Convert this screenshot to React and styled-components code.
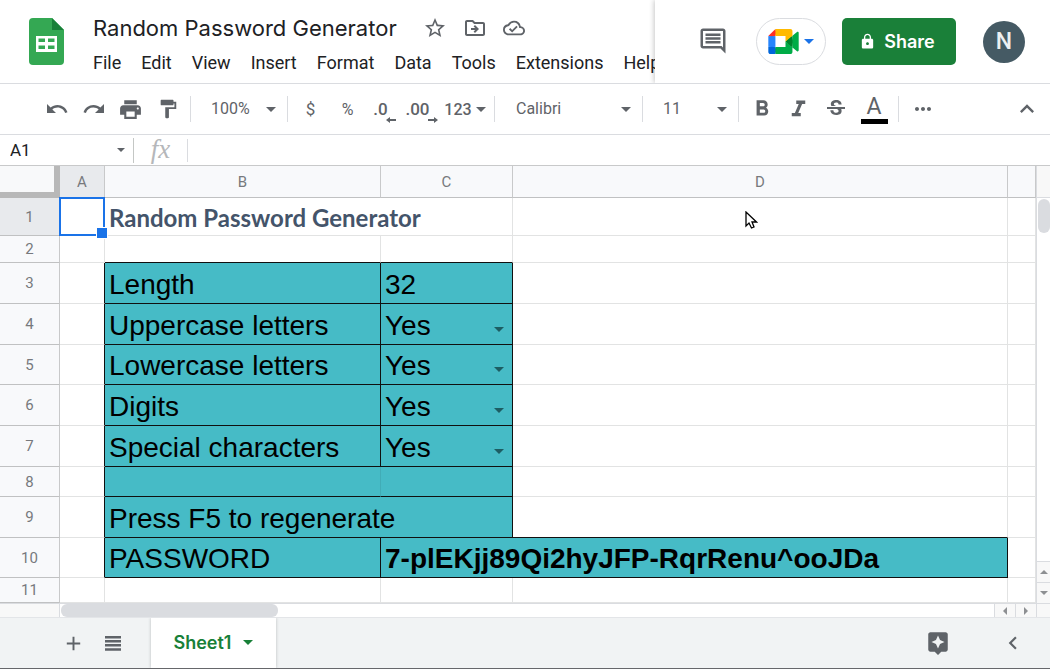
import React, { useState } from 'react';
import styled, { createGlobalStyle } from 'styled-components';
import {
  MdAdd,
  MdAssistant,
  MdFormatBold,
  MdFormatItalic,
  MdFormatPaint,
  MdKeyboardArrowLeft,
  MdKeyboardArrowUp,
  MdLock,
  MdMoreHoriz,
  MdOutlineCloudDone,
  MdOutlineComment,
  MdOutlineDriveFileMove,
  MdPrint,
  MdRedo,
  MdStarBorder,
  MdStrikethroughS,
  MdUndo,
} from 'react-icons/md';

const TEAL = '#46bbc6';
const GRID = '#e2e3e3';
const INK = '#101010';

const GlobalStyle = createGlobalStyle`
  * {
    box-sizing: border-box;
  }

  body {
    margin: 0;
    background: #ffffff;
    font-family: Roboto, sans-serif;
    color: #202124;
  }

  button,
  input,
  select {
    margin: 0;
    padding: 0;
    border: none;
    background: none;
    font-family: inherit;
    color: inherit;
  }
`;

const Page = styled.div`
  display: flex;
  flex-direction: column;
  min-height: 100vh;
`;

const Header = styled.header`
  display: flex;
  height: 84px;
  border-bottom: 1px solid #dadce0;
`;

const Document = styled.div`
  display: flex;
  flex: 1;
  min-width: 0;
  overflow: hidden;
  padding-left: 29px;
`;

const LogoLink = styled.a`
  flex: none;
  margin-top: 18px;
  line-height: 0;
`;

const DocumentInfo = styled.div`
  flex: none;
  padding: 12px 0 0 29px;
`;

const TitleRow = styled.div`
  display: flex;
  align-items: center;
  gap: 16px;
  height: 32px;
`;

const Title = styled.h1`
  margin: 0 10px 0 0;
  font-family: Inter, sans-serif;
  font-size: 22px;
  font-weight: 400;
  line-height: 32px;
  white-space: nowrap;
`;

const TitleButton = styled.button`
  display: flex;
  color: #5f6368;
`;

const MenuBar = styled.nav`
  display: flex;
  gap: 20px;
  margin-top: 7px;
`;

const MenuButton = styled.button`
  font-size: 18px;
  line-height: 24px;
`;

const Actions = styled.div`
  display: flex;
  flex: none;
  align-items: flex-start;
  padding: 18px 25px 0 43px;
  background: #ffffff;
  box-shadow: -1px 0 5px rgba(0, 0, 0, 0.22);
  clip-path: inset(0 0 0 -8px);
`;

const CommentButton = styled.button`
  display: flex;
  margin: 8px 28px 0 0;
  color: #5f6368;
`;

const MeetButton = styled.button`
  display: flex;
  align-items: center;
  justify-content: center;
  gap: 5px;
  width: 70px;
  height: 47px;
  margin-right: 16px;
  border: 1px solid #dadce0;
  border-radius: 24px;
`;

const ShareButton = styled.button`
  display: flex;
  align-items: center;
  justify-content: center;
  gap: 8px;
  width: 114px;
  height: 47px;
  margin-right: 27px;
  padding-right: 4px;
  border-radius: 5px;
  background: #1a8039;
  color: #ffffff;
  font-family: Inter, sans-serif;
  font-size: 18px;
  font-weight: 600;
`;

const Avatar = styled.button`
  width: 42px;
  height: 42px;
  margin-top: 3px;
  border-radius: 50%;
  background: #455a64;
  color: #eceff1;
  font-size: 23px;
  font-weight: 500;
  line-height: 42px;
`;

const Toolbar = styled.div`
  display: flex;
  align-items: center;
  height: 51px;
  padding: 0 5px 0 38px;
  border-bottom: 1px solid #dadce0;
  color: #5f6368;
`;

const ToolButton = styled.button`
  display: flex;
  align-items: center;
  justify-content: center;
  width: ${props => props.$width || 37}px;
  height: 36px;
  gap: 4px;
  font-size: ${props => props.$size || 17}px;
  font-weight: ${props => props.$weight || 400};
`;

const Separator = styled.span`
  width: 1px;
  height: 26px;
  margin: 0 4px;
  background: #dadce0;
`;

const DecimalIcon = styled.span`
  display: flex;
  flex-direction: column;
  align-items: flex-end;
  padding: 6px 8px 0 0;
  font-size: 17px;
  font-weight: 500;
  line-height: 16px;

  svg {
    margin-right: -8px;
  }
`;

const ColorIcon = styled.span`
  display: flex;
  flex-direction: column;
  align-items: center;
  width: 27px;
  border-bottom: 5px solid #000000;
  font-size: 23px;
  line-height: 25px;
`;

const Picker = styled.label`
  display: flex;
  align-items: center;
  width: ${props => props.$width}px;
  padding: 0 7px 0 ${props => props.$left || 16}px;
`;

const PickerSelect = styled.select`
  appearance: none;
  flex: 1;
  min-width: 0;
  font-size: 16px;
  line-height: 24px;
  outline: none;
`;

const Spacer = styled.span`
  flex: 1;
`;

const FormulaBar = styled.div`
  display: flex;
  align-items: center;
  height: 31px;
  border-bottom: 1px solid #c8c9ca;
`;

const NameBox = styled.label`
  display: flex;
  align-items: center;
  width: 134px;
  height: 25px;
  padding: 0 8px 0 10px;
  border-right: 1px solid #c4c7c5;
  color: #5f6368;
`;

const NameInput = styled.input`
  flex: 1;
  min-width: 0;
  color: #202124;
  font-size: 17px;
  outline: none;
`;

const FormulaLabel = styled.label`
  width: 54px;
  height: 23px;
  border-right: 1px solid #dadce0;
  color: #b5b7ba;
  font-family: 'Liberation Serif', serif;
  font-size: 27px;
  font-style: italic;
  line-height: 20px;
  text-align: center;
`;

const FormulaInput = styled.input`
  flex: 1;
  padding: 0 8px;
  font-size: 17px;
  outline: none;
`;

const Workspace = styled.main`
  display: grid;
  grid-template-columns: minmax(0, 1fr) 14px;
`;

const SheetArea = styled.div`
  overflow: hidden;
`;

const Sheet = styled.table`
  width: 100%;
  table-layout: fixed;
  border-collapse: separate;
  border-spacing: 0;
`;

const Col = styled.col`
  width: ${props => (props.$width ? `${props.$width}px` : 'auto')};
`;

const CornerCell = styled.td`
  height: 32px;
  padding: 0;
  border-right: 6px solid #b8b8b8;
  border-bottom: 6px solid #b8b8b8;
  background: #f8f9fa;
`;

const ColumnHeader = styled.th`
  height: 32px;
  padding: 0;
  border-right: 1px solid #c8c9ca;
  border-bottom: 1px solid #c0c1c2;
  background: ${props => (props.$active ? '#e8eaed' : '#f8f9fb')};
  color: #77797d;
  font-size: 15px;
  font-weight: 400;
`;

const RowHeader = styled(ColumnHeader)`
  height: ${props => props.$height}px;
`;

const Cell = styled.td`
  position: relative;
  padding: 0 4px;
  border-right: 1px solid ${props => props.$right || GRID};
  border-bottom: 1px solid ${props => props.$bottom || GRID};
  background: ${props => (props.$filled ? TEAL : '#ffffff')};
  color: #000000;
  font-family: 'Liberation Sans', sans-serif;
  font-size: 28px;
  font-weight: ${props => (props.$bold ? 700 : 400)};
  line-height: 36px;
  vertical-align: bottom;
  white-space: nowrap;
`;

const HeadingCell = styled(Cell)`
  color: #44546a;
  font-family: Lato, sans-serif;
  font-size: 24px;
  font-weight: 700;
  line-height: 34px;
`;

const Selection = styled.div`
  position: absolute;
  z-index: 1;
  inset: -1px;
  border: 2px solid #1a73e8;

  &::after {
    content: '';
    position: absolute;
    right: -5px;
    bottom: -5px;
    width: 10px;
    height: 10px;
    border: 1px solid #ffffff;
    background: #1a73e8;
  }
`;

const Choice = styled.label`
  display: flex;
  align-items: center;
  padding-right: 4px;
  color: #1d5d63;

  svg {
    margin-top: 6px;
  }
`;

const ChoiceSelect = styled.select`
  appearance: none;
  flex: 1;
  min-width: 0;
  height: 36px;
  color: #000000;
  font-size: 28px;
  line-height: 36px;
  outline: none;
`;

const Pointer = styled.svg`
  position: absolute;
  top: 13px;
  left: 47%;
`;

const VerticalScroll = styled.div`
  display: flex;
  flex-direction: column;
  border-left: 1px solid #dadce0;
`;

const ScrollTop = styled.div`
  height: 32px;
  border-bottom: 1px solid #dadce0;
  background: #f8f8f8;
`;

const ScrollTrack = styled.div`
  flex: 1;
  padding: 1px 0 0 1px;
`;

const HorizontalScroll = styled.div`
  display: flex;
  height: 14px;
  border-top: 1px solid #dadce0;
`;

const ScrollStart = styled.div`
  width: 60px;
  border-right: 1px solid #dadce0;
  background: #f8f8f8;
`;

const Thumb = styled.div`
  width: ${props => props.$width}px;
  height: ${props => props.$height}px;
  border-radius: 6px;
  background: #dadce0;
`;

const HorizontalTrack = styled.div`
  flex: 1;
  padding-left: 1px;
`;

const ScrollButton = styled.button`
  display: flex;
  align-items: center;
  justify-content: center;
  width: ${props => (props.$vertical ? 13 : 21)}px;
  height: ${props => (props.$vertical ? 21 : 13)}px;
  border-top: ${props => (props.$vertical ? '1px solid #dadce0' : 'none')};
  border-left: ${props => (props.$vertical ? 'none' : '1px solid #dadce0')};
  background: #f8f8f8;
  color: #8d8f92;
`;

const ScrollCorner = styled.div`
  border-top: 1px solid #dadce0;
  border-left: 1px solid #dadce0;
  background: #f8f8f8;
`;

const Footer = styled.footer`
  display: flex;
  align-items: center;
  height: 52px;
  padding: 0 24px 0 60px;
  border-top: 1px solid #e3e5e8;
  border-bottom: 1px solid #66676b;
  background: #f1f3f4;
  color: #5f6368;
`;

const FooterButton = styled.button`
  display: flex;
  align-items: center;
  justify-content: center;
  width: 26px;
  margin-right: ${props => props.$gap || 0}px;
`;

const SheetTab = styled.button`
  display: flex;
  align-items: center;
  justify-content: center;
  gap: 12px;
  width: 125px;
  height: 50px;
  padding-bottom: 2px;
  background: #ffffff;
  box-shadow: 0 0 3px rgba(60, 64, 67, 0.3);
  clip-path: inset(0 -4px);
  color: #188038;
  font-family: Inter, sans-serif;
  font-size: 18px;
  font-weight: 600;
`;

const columns = [
  { name: 'A', width: 45 },
  { name: 'B', width: 276 },
  { name: 'C', width: 132 },
  { name: 'D', width: 495 },
  { name: '' },
];

const options = [
  { row: 4, label: 'Uppercase letters', height: 41 },
  { row: 5, label: 'Lowercase letters', height: 40 },
  { row: 6, label: 'Digits', height: 41 },
  { row: 7, label: 'Special characters', height: 41 },
];

const Caret = ({ width = 10, color = 'currentColor' }) => (
  <svg width={width} height={width / 2} viewBox="0 0 10 5" fill={color}>
    <path d="M0 0h10L5 5z" />
  </svg>
);

const SheetsLogo = () => (
  <svg width="35" height="47" viewBox="0 0 35 47">
    <path
      d="M4 0h19l12 12v31a4 4 0 0 1-4 4H4a4 4 0 0 1-4-4V4a4 4 0 0 1 4-4z"
      fill="#34a853"
    />
    <path d="M23 0l12 12H23z" fill="#188038" />
    <path
      d="M7 18h21v16H7zM9.500 20.500v3.500h6.500v-3.500zM19 20.500v3.500h6.500v-3.500zM9.500 27.500v3.500h6.500v-3.500zM19 27.500v3.500h6.500v-3.500z"
      fill="#ffffff"
      fillRule="evenodd"
    />
  </svg>
);

const MeetLogo = () => (
  <svg width="31" height="25" viewBox="0 0 87.5 72">
    <path
      fill="#00832d"
      d="M49.5 36l8.53 9.75 11.47 7.33 2-17.02-2-16.64-11.69 6.44z"
    />
    <path
      fill="#0066da"
      d="M0 51.5V66c0 3.315 2.685 6 6 6h14.500l3-10.960-3-9.540-9.950-3z"
    />
    <path fill="#ff2d25" d="M20.5 0L0 20.5l10.550 3 9.950-3 2.950-9.410z" />
    <path fill="#2684fc" d="M20.5 20.5H0v31h20.500z" />
    <path
      fill="#00ac47"
      d="M82.600 8.680L69.500 19.420v33.660l13.160 10.790c1.970 1.540 4.850.135 4.850-2.370V11c0-2.535-2.945-3.925-4.910-2.320zM49.500 36v15.500h-29V72h43c3.315 0 6-2.685 6-6V53.080z"
    />
    <path
      fill="#ffba00"
      d="M63.5 0h-43v20.500h29V36l20-16.570V6c0-3.315-2.685-6-6-6z"
    />
  </svg>
);

const Arrow = ({ right }) => (
  <svg width="10" height="6" viewBox="0 0 10 6" fill="currentColor">
    <path d={right ? 'M0 2h6V0l4 3-4 3V4H0z' : 'M10 2H4V0L0 3l4 3V4h6z'} />
  </svg>
);

const ScrollArrow = ({ d }) => (
  <svg width="8" height="8" viewBox="0 0 8 8" fill="currentColor">
    <path d={d} />
  </svg>
);

const OptionRow = ({ option }) => {
  const [value, setValue] = useState('Yes');

  return (
    <tr>
      <RowHeader scope="row" $height={option.height}>
        {option.row}
      </RowHeader>
      <Cell $right={INK} />
      <Cell $filled $right={INK} $bottom={INK}>
        {option.label}
      </Cell>
      <Cell $filled $right={INK} $bottom={INK}>
        <Choice>
          <ChoiceSelect
            aria-label={option.label}
            value={value}
            onChange={e => setValue(e.target.value)}
          >
            <option>Yes</option>
            <option>No</option>
          </ChoiceSelect>
          <Caret />
        </Choice>
      </Cell>
      <Cell />
      <Cell />
    </tr>
  );
};

const App = () => {
  const menus = [
    'File',
    'Edit',
    'View',
    'Insert',
    'Format',
    'Data',
    'Tools',
    'Extensions',
    'Help',
  ];

  return (
    <Page>
      <GlobalStyle />
      <Header>
        <Document>
          <LogoLink href="#" aria-label="Sheets home">
            <SheetsLogo />
          </LogoLink>
          <DocumentInfo>
            <TitleRow>
              <Title>Random Password Generator</Title>
              <TitleButton aria-label="Star">
                <MdStarBorder size={24} />
              </TitleButton>
              <TitleButton aria-label="Move">
                <MdOutlineDriveFileMove size={24} />
              </TitleButton>
              <TitleButton aria-label="Document status">
                <MdOutlineCloudDone size={22} />
              </TitleButton>
            </TitleRow>
            <MenuBar>
              {menus.map(menu => (
                <MenuButton key={menu}>{menu}</MenuButton>
              ))}
            </MenuBar>
          </DocumentInfo>
        </Document>
        <Actions>
          <CommentButton aria-label="Comments">
            <MdOutlineComment size={30} />
          </CommentButton>
          <MeetButton aria-label="Join a call">
            <MeetLogo />
            <Caret color="#1a73e8" />
          </MeetButton>
          <ShareButton>
            <MdLock size={17} />
            Share
          </ShareButton>
          <Avatar aria-label="Account">N</Avatar>
        </Actions>
      </Header>

      <Toolbar>
        <ToolButton aria-label="Undo">
          <MdUndo size={24} />
        </ToolButton>
        <ToolButton aria-label="Redo">
          <MdRedo size={24} />
        </ToolButton>
        <ToolButton aria-label="Print">
          <MdPrint size={25} />
        </ToolButton>
        <ToolButton aria-label="Paint format">
          <MdFormatPaint size={22} />
        </ToolButton>
        <Separator />
        <Picker $width={88}>
          <PickerSelect aria-label="Zoom">
            <option>100%</option>
          </PickerSelect>
          <Caret />
        </Picker>
        <Separator />
        <ToolButton aria-label="Currency">$</ToolButton>
        <ToolButton aria-label="Percent" $size={16}>
          %
        </ToolButton>
        <ToolButton aria-label="Decrease decimal places">
          <DecimalIcon>
            .0
            <Arrow />
          </DecimalIcon>
        </ToolButton>
        <ToolButton aria-label="Increase decimal places">
          <DecimalIcon>
            .00
            <Arrow right />
          </DecimalIcon>
        </ToolButton>
        <ToolButton aria-label="More formats" $width={50} $size={16} $weight={500}>
          123
          <Caret />
        </ToolButton>
        <Separator />
        <Picker $width={139} $left={17}>
          <PickerSelect aria-label="Font">
            <option>Calibri</option>
          </PickerSelect>
          <Caret />
        </Picker>
        <Separator />
        <Picker $width={87}>
          <PickerSelect aria-label="Font size">
            <option>11</option>
          </PickerSelect>
          <Caret />
        </Picker>
        <Separator />
        <ToolButton aria-label="Bold">
          <MdFormatBold size={26} />
        </ToolButton>
        <ToolButton aria-label="Italic">
          <MdFormatItalic size={27} />
        </ToolButton>
        <ToolButton aria-label="Strikethrough">
          <MdStrikethroughS size={24} />
        </ToolButton>
        <ToolButton aria-label="Text color" $width={40}>
          <ColorIcon>A</ColorIcon>
        </ToolButton>
        <Separator />
        <ToolButton aria-label="More" $width={40}>
          <MdMoreHoriz size={24} />
        </ToolButton>
        <Spacer />
        <ToolButton aria-label="Hide the menus">
          <MdKeyboardArrowUp size={28} />
        </ToolButton>
      </Toolbar>

      <FormulaBar>
        <NameBox>
          <NameInput aria-label="Name box" defaultValue="A1" />
          <Caret width={8} />
        </NameBox>
        <FormulaLabel htmlFor="formula">fx</FormulaLabel>
        <FormulaInput id="formula" />
      </FormulaBar>

      <Workspace>
        <SheetArea>
          <Sheet>
            <colgroup>
              <Col $width={60} />
              {columns.map(column => (
                <Col key={column.name} $width={column.width} />
              ))}
            </colgroup>
            <thead>
              <tr>
                <CornerCell />
                {columns.map(column => (
                  <ColumnHeader
                    key={column.name}
                    scope="col"
                    $active={column.name === 'A'}
                  >
                    {column.name}
                  </ColumnHeader>
                ))}
              </tr>
            </thead>
            <tbody>
              <tr>
                <RowHeader scope="row" $height={38} $active>
                  1
                </RowHeader>
                <Cell>
                  <Selection />
                </Cell>
                <HeadingCell colSpan={2}>Random Password Generator</HeadingCell>
                <Cell>
                  <Pointer width="13" height="18" viewBox="0 0 13 18">
                    <path
                      d="M1 1v14l3-3 2.500 5 2.500-1-2-5h4.500z"
                      fill="#ffffff"
                      stroke="#000000"
                      strokeWidth="1.300"
                    />
                  </Pointer>
                </Cell>
                <Cell />
              </tr>
              <tr>
                <RowHeader scope="row" $height={27}>
                  2
                </RowHeader>
                <Cell />
                <Cell $bottom={INK} />
                <Cell $bottom={INK} />
                <Cell />
                <Cell />
              </tr>
              <tr>
                <RowHeader scope="row" $height={41}>
                  3
                </RowHeader>
                <Cell $right={INK} />
                <Cell $filled $right={INK} $bottom={INK}>
                  Length
                </Cell>
                <Cell $filled $right={INK} $bottom={INK}>
                  32
                </Cell>
                <Cell />
                <Cell />
              </tr>
              {options.map(option => (
                <OptionRow key={option.row} option={option} />
              ))}
              <tr>
                <RowHeader scope="row" $height={30}>
                  8
                </RowHeader>
                <Cell $right={INK} />
                <Cell $filled $right="#41acb6" $bottom={INK} />
                <Cell $filled $right={INK} $bottom={INK} />
                <Cell />
                <Cell />
              </tr>
              <tr>
                <RowHeader scope="row" $height={41}>
                  9
                </RowHeader>
                <Cell $right={INK} />
                <Cell colSpan={2} $filled $right={INK} $bottom={INK}>
                  Press F5 to regenerate
                </Cell>
                <Cell $bottom={INK} />
                <Cell />
              </tr>
              <tr>
                <RowHeader scope="row" $height={40}>
                  10
                </RowHeader>
                <Cell $right={INK} />
                <Cell $filled $right={INK} $bottom={INK}>
                  PASSWORD
                </Cell>
                <Cell colSpan={2} $filled $bold $right={INK} $bottom={INK}>
                  7-plEKjj89Qi2hyJFP-RqrRenu^ooJDa
                </Cell>
                <Cell />
              </tr>
              <tr>
                <RowHeader scope="row" $height={25}>
                  11
                </RowHeader>
                <Cell />
                <Cell />
                <Cell />
                <Cell />
                <Cell />
              </tr>
            </tbody>
          </Sheet>
        </SheetArea>
        <VerticalScroll>
          <ScrollTop />
          <ScrollTrack>
            <Thumb $width={12} $height={34} />
          </ScrollTrack>
          <ScrollButton $vertical aria-label="Scroll up">
            <ScrollArrow d="M0 6l4-4 4 4z" />
          </ScrollButton>
          <ScrollButton $vertical aria-label="Scroll down">
            <ScrollArrow d="M0 2l4 4 4-4z" />
          </ScrollButton>
        </VerticalScroll>
        <HorizontalScroll>
          <ScrollStart />
          <HorizontalTrack>
            <Thumb $width={217} $height={13} />
          </HorizontalTrack>
          <ScrollButton aria-label="Scroll left">
            <ScrollArrow d="M6 0L2 4l4 4z" />
          </ScrollButton>
          <ScrollButton aria-label="Scroll right">
            <ScrollArrow d="M2 0l4 4-4 4z" />
          </ScrollButton>
        </HorizontalScroll>
        <ScrollCorner />
      </Workspace>

      <Footer>
        <FooterButton aria-label="Add sheet" $gap={14}>
          <MdAdd size={23} />
        </FooterButton>
        <FooterButton aria-label="All sheets" $gap={25}>
          <svg width="16" height="15" viewBox="0 0 16 15" fill="currentColor">
            <path d="M0 0h16v2.500H0zM0 4h16v2.500H0zM0 8h16v2.500H0zM0 12.200h16v2.500H0z" />
          </svg>
        </FooterButton>
        <SheetTab>
          Sheet1
          <Caret color="#188038" />
        </SheetTab>
        <Spacer />
        <FooterButton aria-label="Explore" $gap={49}>
          <MdAssistant size={30} />
        </FooterButton>
        <FooterButton aria-label="Show side panel">
          <MdKeyboardArrowLeft size={28} />
        </FooterButton>
      </Footer>
    </Page>
  );
};

export default App;
